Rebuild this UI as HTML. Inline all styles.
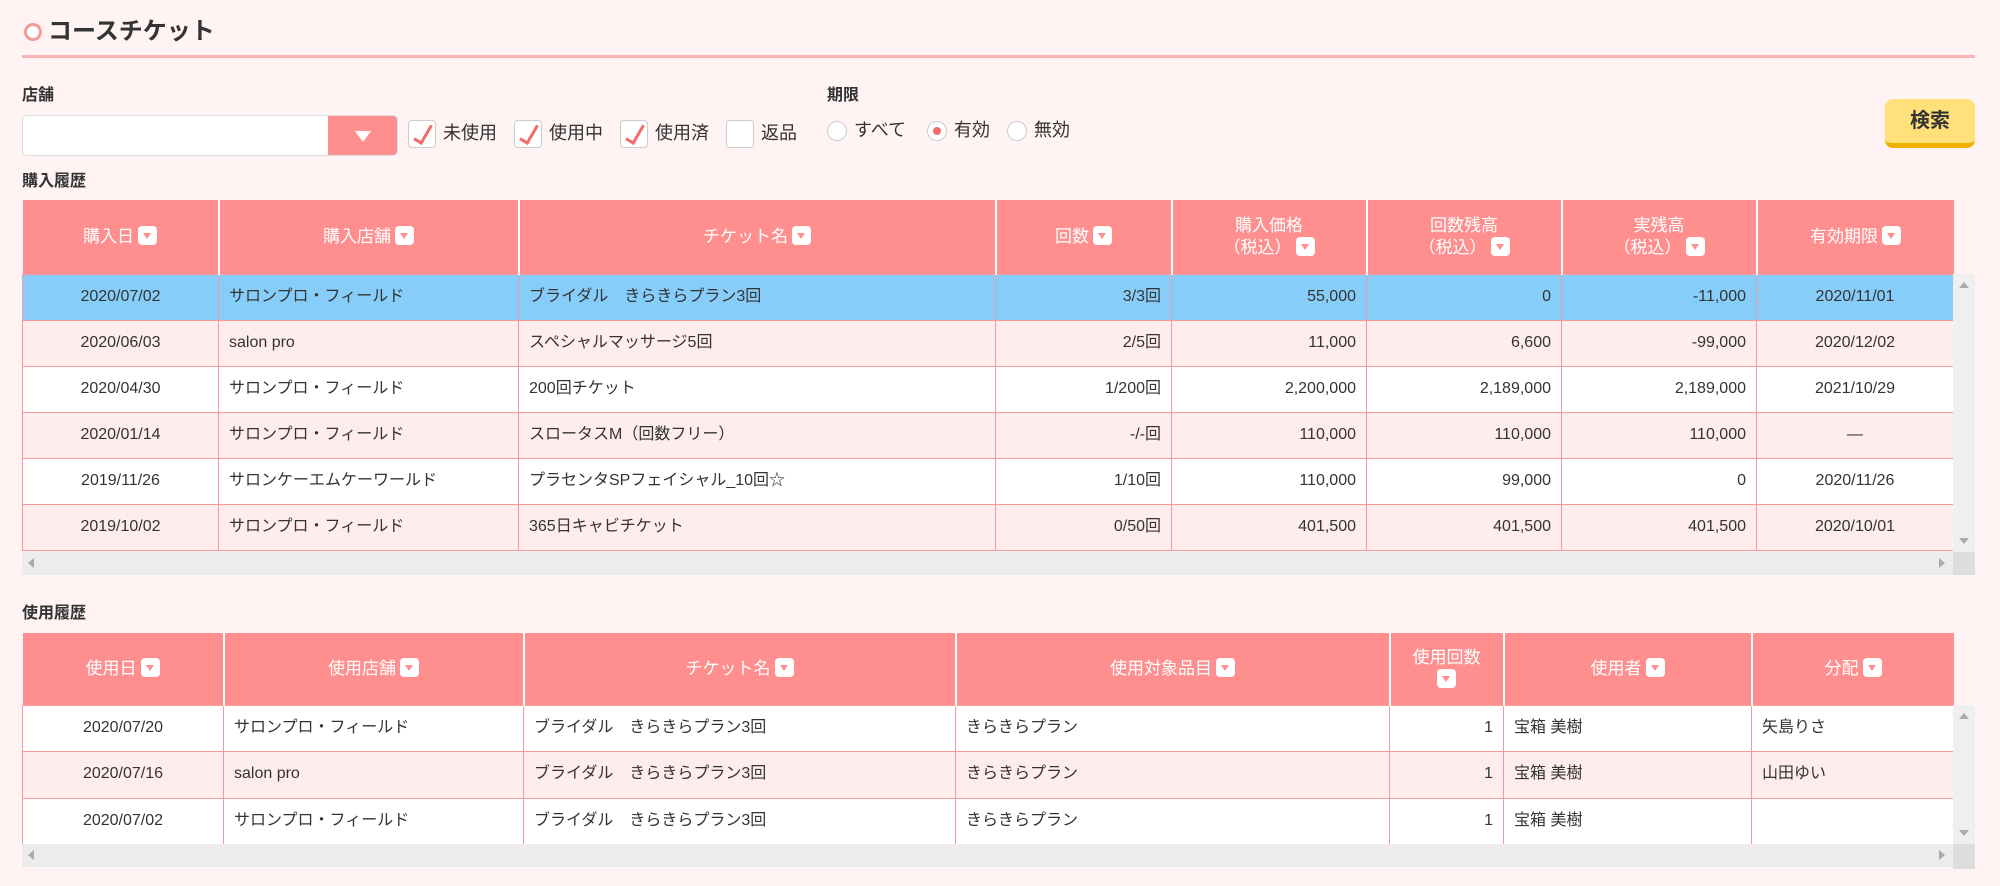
<!DOCTYPE html>
<html><head><meta charset="utf-8">
<style>
*{box-sizing:border-box;margin:0;padding:0}
body{width:2000px;height:886px;background:#fff3f3;font-family:"Liberation Sans","Noto Sans CJK JP",sans-serif;color:#333;position:relative;overflow:hidden}
.abs{position:absolute}
.title{left:24px;top:17px;font-size:24px;font-weight:bold;color:#333;display:flex;align-items:center;line-height:30px}
.title .c{width:18px;height:18px;border:3px solid #f49a9a;border-radius:50%;margin-right:6px;background:#fff}
.hr{left:22px;top:55px;width:1953px;height:3px;background:#f8b4b4}
.lbl{font-size:16px;font-weight:bold;color:#333;line-height:20px}
.sel{left:22px;top:115px;width:376px;height:41px;background:#fff;border:1px solid #ddd;border-radius:5px;overflow:hidden}
.sel .dd{position:absolute;right:0;top:0;width:69px;height:100%;background:#ff8f8f;}
.sel .dd:after{content:"";position:absolute;left:27px;top:15px;border-left:8px solid transparent;border-right:8px solid transparent;border-top:11px solid #fff}
.cb{width:28px;height:28px;background:#fff;border:1px solid #ccc;border-radius:4px;position:absolute}
.ck{position:absolute;left:9px;top:1px;width:10px;height:22px;border-right:3px solid #f46b6b;border-bottom:3px solid #f46b6b;transform:rotate(30deg)}
.cl{font-size:18px;position:absolute;line-height:24px}
.rd{width:20px;height:20px;border:1px solid #ccc;border-radius:50%;background:#fff;position:absolute}
.rd.on:after{content:"";position:absolute;left:5px;top:5px;width:8px;height:8px;border-radius:50%;background:#f46b6b}
.btn{left:1885px;top:99px;width:90px;height:49px;background:#ffe07a;border-radius:8px;border-bottom:5px solid #f0b000;font-size:20px;font-weight:bold;text-align:center;line-height:44px;color:#333}
table{position:absolute;border-collapse:collapse;table-layout:fixed;font-size:16px}
th{background:#ff8f8f;color:#fff;font-weight:normal;border-left:2px solid #fff;font-size:17px;line-height:22px;vertical-align:middle}
th:first-child{border-left:none}
td{border:1px solid #f59a9a;padding:0 10px;white-space:nowrap;overflow:hidden;line-height:20px;height:20px;vertical-align:middle}
td span.t{display:inline-block;line-height:20px;vertical-align:middle}
td.c{text-align:center}td.r{text-align:right}
tr.o td{background:#ffecec}tr.e td{background:#fff}tr.s td{background:#87cdf9}
.a{display:inline-block;width:19px;height:19px;background:#fff;border-radius:4px;vertical-align:-3px;margin-left:4px;position:relative}
.a:after{content:"";position:absolute;left:5px;top:7px;border-left:4.5px solid transparent;border-right:4.5px solid transparent;border-top:6px solid #ff8f8f}
.hs{background:#ececec;height:23px}
.vs{background:#efefef;width:22px}
.up,.dn,.lf,.rt{position:absolute;width:0;height:0}
.up{border-left:5px solid transparent;border-right:5px solid transparent;border-bottom:6px solid #aaa}
.dn{border-left:5px solid transparent;border-right:5px solid transparent;border-top:6px solid #aaa}
.lf{border-top:5px solid transparent;border-bottom:5px solid transparent;border-right:6px solid #aaa}
.rt{border-top:5px solid transparent;border-bottom:5px solid transparent;border-left:6px solid #aaa}
</style></head><body>
<div class="abs title"><span class="c"></span>コースチケット</div>
<div class="abs hr"></div>
<div class="abs lbl" style="left:22px;top:86px">店舗</div>
<div class="abs sel"><div class="dd"></div></div>
<div class="cb" style="left:408px;top:120px"><div class="ck"></div></div><div class="cl" style="left:443px;top:121px">未使用</div>
<div class="cb" style="left:514px;top:120px"><div class="ck"></div></div><div class="cl" style="left:549px;top:121px">使用中</div>
<div class="cb" style="left:620px;top:120px"><div class="ck"></div></div><div class="cl" style="left:655px;top:121px">使用済</div>
<div class="cb" style="left:726px;top:120px"></div><div class="cl" style="left:761px;top:121px">返品</div>
<div class="abs lbl" style="left:827px;top:86px">期限</div>
<div class="rd" style="left:827px;top:121px"></div><div class="cl" style="left:854px;top:118px">すべて</div>
<div class="rd on" style="left:927px;top:121px"></div><div class="cl" style="left:954px;top:118px">有効</div>
<div class="rd" style="left:1007px;top:121px"></div><div class="cl" style="left:1034px;top:118px">無効</div>
<div class="abs btn">検索</div>
<div class="abs lbl" style="left:22px;top:172px">購入履歴</div>

<table style="left:22px;top:200px;width:1931px">
<colgroup><col style="width:196px"><col style="width:300px"><col style="width:477px"><col style="width:176px"><col style="width:195px"><col style="width:195px"><col style="width:195px"><col style="width:197px"></colgroup>
<tr style="height:74px"><th>購入日<span class="a"></span></th><th>購入店舗<span class="a"></span></th><th>チケット名<span class="a"></span></th><th>回数<span class="a"></span></th><th>購入価格<br>（税込）<span class="a"></span></th><th>回数残高<br>（税込）<span class="a"></span></th><th>実残高<br>（税込）<span class="a"></span></th><th>有効期限<span class="a"></span></th></tr>
<tr class="s" style="height:46px"><td class="c"><span class="t">2020/07/02</span></td><td><span class="t">サロンプロ・フィールド</span></td><td><span class="t">ブライダル　きらきらプラン3回</span></td><td class="r"><span class="t">3/3回</span></td><td class="r"><span class="t">55,000</span></td><td class="r"><span class="t">0</span></td><td class="r"><span class="t">-11,000</span></td><td class="c"><span class="t">2020/11/01</span></td></tr>
<tr class="o" style="height:46px"><td class="c"><span class="t">2020/06/03</span></td><td><span class="t">salon pro</span></td><td><span class="t">スペシャルマッサージ5回</span></td><td class="r"><span class="t">2/5回</span></td><td class="r"><span class="t">11,000</span></td><td class="r"><span class="t">6,600</span></td><td class="r"><span class="t">-99,000</span></td><td class="c"><span class="t">2020/12/02</span></td></tr>
<tr class="e" style="height:46px"><td class="c"><span class="t">2020/04/30</span></td><td><span class="t">サロンプロ・フィールド</span></td><td><span class="t">200回チケット</span></td><td class="r"><span class="t">1/200回</span></td><td class="r"><span class="t">2,200,000</span></td><td class="r"><span class="t">2,189,000</span></td><td class="r"><span class="t">2,189,000</span></td><td class="c"><span class="t">2021/10/29</span></td></tr>
<tr class="o" style="height:46px"><td class="c"><span class="t">2020/01/14</span></td><td><span class="t">サロンプロ・フィールド</span></td><td><span class="t">スロータスM（回数フリー）</span></td><td class="r"><span class="t">-/-回</span></td><td class="r"><span class="t">110,000</span></td><td class="r"><span class="t">110,000</span></td><td class="r"><span class="t">110,000</span></td><td class="c"><span class="t">—</span></td></tr>
<tr class="e" style="height:46px"><td class="c"><span class="t">2019/11/26</span></td><td><span class="t">サロンケーエムケーワールド</span></td><td><span class="t">プラセンタSPフェイシャル_10回☆</span></td><td class="r"><span class="t">1/10回</span></td><td class="r"><span class="t">110,000</span></td><td class="r"><span class="t">99,000</span></td><td class="r"><span class="t">0</span></td><td class="c"><span class="t">2020/11/26</span></td></tr>
<tr class="o" style="height:46px"><td class="c"><span class="t">2019/10/02</span></td><td><span class="t">サロンプロ・フィールド</span></td><td><span class="t">365日キャビチケット</span></td><td class="r"><span class="t">0/50回</span></td><td class="r"><span class="t">401,500</span></td><td class="r"><span class="t">401,500</span></td><td class="r"><span class="t">401,500</span></td><td class="c"><span class="t">2020/10/01</span></td></tr>
</table>
<div class="abs vs" style="left:1953px;top:274px;height:278px"><div class="up" style="left:6px;top:8px"></div><div class="dn" style="left:6px;top:264px"></div></div>
<div class="abs hs" style="left:22px;top:552px;width:1931px"><div class="lf" style="left:6px;top:6px"></div><div class="rt" style="left:1917px;top:6px"></div></div>
<div class="abs" style="left:1953px;top:552px;width:22px;height:23px;background:#ddd"></div>

<div class="abs lbl" style="left:22px;top:604px">使用履歴</div>
<table style="left:22px;top:633px;width:1931px">
<colgroup><col style="width:201px"><col style="width:300px"><col style="width:432px"><col style="width:434px"><col style="width:114px"><col style="width:248px"><col style="width:202px"></colgroup>
<tr style="height:72px"><th>使用日<span class="a"></span></th><th>使用店舗<span class="a"></span></th><th>チケット名<span class="a"></span></th><th>使用対象品目<span class="a"></span></th><th>使用回数<br><span class="a" style="margin:0"></span></th><th>使用者<span class="a"></span></th><th>分配<span class="a"></span></th></tr>
<tr class="e" style="height:46px"><td class="c"><span class="t">2020/07/20</span></td><td><span class="t">サロンプロ・フィールド</span></td><td><span class="t">ブライダル　きらきらプラン3回</span></td><td><span class="t">きらきらプラン</span></td><td class="r"><span class="t">1</span></td><td><span class="t">宝箱 美樹</span></td><td><span class="t">矢島りさ</span></td></tr>
<tr class="o" style="height:47px"><td class="c"><span class="t">2020/07/16</span></td><td><span class="t">salon pro</span></td><td><span class="t">ブライダル　きらきらプラン3回</span></td><td><span class="t">きらきらプラン</span></td><td class="r"><span class="t">1</span></td><td><span class="t">宝箱 美樹</span></td><td><span class="t">山田ゆい</span></td></tr>
<tr class="e" style="height:46px"><td class="c"><span class="t">2020/07/02</span></td><td><span class="t">サロンプロ・フィールド</span></td><td><span class="t">ブライダル　きらきらプラン3回</span></td><td><span class="t">きらきらプラン</span></td><td class="r"><span class="t">1</span></td><td><span class="t">宝箱 美樹</span></td><td></td></tr>
</table>
<div class="abs vs" style="left:1953px;top:705px;height:139px"><div class="up" style="left:6px;top:8px"></div><div class="dn" style="left:6px;top:125px"></div></div>
<div class="abs hs" style="left:22px;top:844px;width:1931px"><div class="lf" style="left:6px;top:6px"></div><div class="rt" style="left:1917px;top:6px"></div></div>
<div class="abs" style="left:1953px;top:844px;width:22px;height:25px;background:#ddd"></div>
</body></html>
